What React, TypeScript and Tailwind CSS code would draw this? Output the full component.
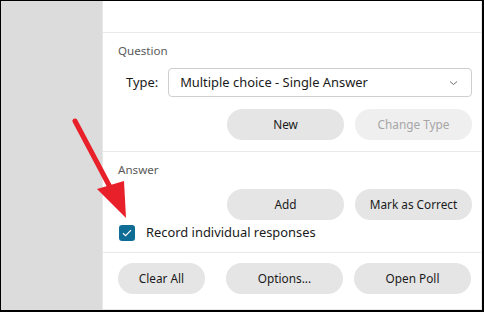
import React from "react";

const font = { fontFamily: '"Segoe UI", "Noto Sans", "Liberation Sans", sans-serif' };

const Btn: React.FC<{ label: string; disabled?: boolean; className?: string }> = ({
  label,
  disabled,
  className = "w-[117px]",
}) => (
  <button
    className={`h-[31px] rounded-full text-[11.8px] ${className} ${
      disabled ? "bg-[#efefef] text-[#a6a6a6]" : "bg-[#e5e5e5] text-[#1a1a1a]"
    }`}
  >
    {label}
  </button>
);

const App: React.FC = () => {
  return (
    <div
      className="relative w-[484px] h-[312px] flex bg-white border-t border-l border-r-2 border-b-2 border-black overflow-hidden"
      style={font}
    >
      {/* Left gray pane */}
      <div className="w-[101px] shrink-0 bg-[#dcdcdc]" />

      {/* Poll panel */}
      <div className="flex-1 flex flex-col border-l border-r border-b border-[#e8e8e8] pr-[9px]">
        <div className="h-[32px] shrink-0 border-b border-[#e8e8e8] -mr-[9px]" />

        {/* Question */}
        <div className="h-[119px] shrink-0 border-b border-[#e8e8e8] -mr-[9px] pr-[9px] pl-[15px] pt-[9px]">
          <div className="text-[11.6px] leading-[17px] text-[#5a5a5a]">Question</div>
          <div className="flex items-center mt-[9px]">
            <span className="ml-[8px] text-[12.9px] text-[#1a1a1a]">Type:</span>
            <div className="ml-[10px] flex-1 h-[29px] flex items-center justify-between border border-[#cfcfcf] rounded-[4px] pl-[11px] pr-[13px] text-[12.9px] text-[#1a1a1a]">
              <span>Multiple choice - Single Answer</span>
              <svg width="9" height="6" viewBox="0 0 9 6" fill="none">
                <path d="M1 1.5 L4.5 4.5 L8 1.5" stroke="#707070" strokeWidth="1" />
              </svg>
            </div>
          </div>
          <div className="flex justify-end gap-[11px] mt-[12px]">
            <Btn label="New" />
            <Btn label="Change Type" disabled />
          </div>
        </div>

        {/* Answer */}
        <div className="h-[101px] shrink-0 border-b border-[#e8e8e8] -mr-[9px] pr-[9px] pl-[15px] pt-[9px]">
          <div className="text-[11.6px] leading-[17px] text-[#5a5a5a]">Answer</div>
          <div className="flex justify-end gap-[11px] mt-[11px]">
            <Btn label="Add" />
            <Btn label="Mark as Correct" />
          </div>
          <div className="flex items-center mt-[3px]">
            <div className="ml-[1px] w-[16px] h-[16px] rounded-[3px] bg-[#0f6d95] flex items-center justify-center">
              <svg width="10" height="8" viewBox="0 0 10 8" fill="none">
                <path d="M1 4.2 L3.6 6.6 L9 1.2" stroke="white" strokeWidth="1.2" />
              </svg>
            </div>
            <span className="ml-[11px] text-[12.9px] text-[#1a1a1a]">Record individual responses</span>
          </div>
        </div>

        {/* Footer buttons */}
        <div className="flex pl-[15px] pt-[10px] gap-[11px]">
          <Btn label="Clear All" className="w-[87px] mr-[10px]" />
          <Btn label="Options..." />
          <Btn label="Open Poll" />
        </div>
      </div>

      {/* Red annotation arrow */}
      <svg className="absolute left-0 top-0 pointer-events-none" width="484" height="312">
        <line x1="74" y1="120" x2="110" y2="188" stroke="#e8202a" strokeWidth="5" strokeLinecap="round" />
        <polygon points="96,188 123,180 125,217" fill="#e8202a" />
      </svg>
    </div>
  );
};

export default App;
